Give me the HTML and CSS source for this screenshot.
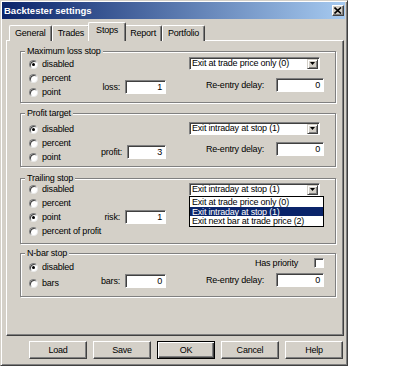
FILE: index.html
```html
<!DOCTYPE html>
<html>
<head>
<meta charset="utf-8">
<link rel="stylesheet" href="styles.css">
</head>
<body>
<div class="dialog">
  <div class="titlebar">
    <span class="title">Backtester settings</span>
    <span class="close"><svg width="8" height="7" viewBox="0 0 8 7"><path d="M0.5 0.5 L7 6.5 M7 0.5 L0.5 6.5" stroke="#000" stroke-width="1.6"/></svg></span>
  </div>
  <div class="tabs">
    <span class="tab">General</span>
    <span class="tab">Trades</span>
    <span class="tab active">Stops</span>
    <span class="tab">Report</span>
    <span class="tab">Portfolio</span>
  </div>
  <div class="panel">
    <div class="group g1">
      <span class="legend">Maximum loss stop</span>
      <div class="col-radio">
        <div class="radio-row"><span class="radio checked"></span>disabled</div>
        <div class="radio-row"><span class="radio"></span>percent</div>
        <div class="radio-row"><span class="radio"></span>point</div>
      </div>
      <div class="col-param">
        <span class="lbl">loss:</span><span class="input">1</span>
      </div>
      <div class="col-right">
        <div class="combo"><span class="combo-text">Exit at trade price only (0)</span><span class="combo-btn"><svg width="5" height="3" viewBox="0 0 5 3"><path d="M0 0 H5 L2.5 3 Z" fill="#000"/></svg></span></div>
        <div class="reentry"><span class="lbl">Re-entry delay:</span><span class="input wide">0</span></div>
      </div>
    </div>

    <div class="group g2">
      <span class="legend">Profit target</span>
      <div class="col-radio">
        <div class="radio-row"><span class="radio checked"></span>disabled</div>
        <div class="radio-row"><span class="radio"></span>percent</div>
        <div class="radio-row"><span class="radio"></span>point</div>
      </div>
      <div class="col-param">
        <span class="lbl">profit:</span><span class="input">3</span>
      </div>
      <div class="col-right">
        <div class="combo"><span class="combo-text">Exit intraday at stop (1)</span><span class="combo-btn"><svg width="5" height="3" viewBox="0 0 5 3"><path d="M0 0 H5 L2.5 3 Z" fill="#000"/></svg></span></div>
        <div class="reentry"><span class="lbl">Re-entry delay:</span><span class="input wide">0</span></div>
      </div>
    </div>

    <div class="group g3">
      <span class="legend">Trailing stop</span>
      <div class="col-radio">
        <div class="radio-row"><span class="radio"></span>disabled</div>
        <div class="radio-row"><span class="radio"></span>percent</div>
        <div class="radio-row"><span class="radio checked"></span>point</div>
        <div class="radio-row"><span class="radio"></span>percent of profit</div>
      </div>
      <div class="col-param">
        <span class="lbl">risk:</span><span class="input">1</span>
      </div>
      <div class="col-right">
        <div class="combo open"><span class="combo-text">Exit intraday at stop (1)</span><span class="combo-btn"><svg width="5" height="3" viewBox="0 0 5 3"><path d="M0 0 H5 L2.5 3 Z" fill="#000"/></svg></span>
          <div class="dropdown-list">
            <div class="opt">Exit at trade price only (0)</div>
            <div class="opt sel">Exit intraday at stop (1)</div>
            <div class="opt">Exit next bar at trade price (2)</div>
          </div>
        </div>
      </div>
    </div>

    <div class="group g4">
      <span class="legend">N-bar stop</span>
      <div class="col-radio">
        <div class="radio-row"><span class="radio checked"></span>disabled</div>
        <div class="radio-row"><span class="radio"></span>bars</div>
      </div>
      <div class="col-param">
        <span class="lbl">bars:</span><span class="input">0</span>
      </div>
      <div class="col-right">
        <div class="priority"><span class="lbl">Has priority</span><span class="checkbox"></span></div>
        <div class="reentry"><span class="lbl">Re-entry delay:</span><span class="input wide">0</span></div>
      </div>
    </div>
  </div>
  <div class="buttons">
    <span class="btn">Load</span>
    <span class="btn">Save</span>
    <span class="btn default">OK</span>
    <span class="btn">Cancel</span>
    <span class="btn">Help</span>
  </div>
</div>
</body>
</html>
```

FILE: styles.css
```css
* { box-sizing: border-box; }
body {
  margin: 0;
  background: #fff;
  font-family: "Liberation Sans", Arial, sans-serif;
  font-size: 9px;
  letter-spacing: -0.2px;
  color: #000;
}
.dialog {
  width: 348px;
  height: 366px;
  background: #d4d0c8;
  border: 1px solid;
  border-color: #d4d0c8 #404040 #404040 #d4d0c8;
  box-shadow: inset 1px 1px #fff, inset -1px -1px #808080;
  padding: 1px 2px 2px 1px;
  display: flex;
  flex-direction: column;
}
.titlebar {
  height: 17px;
  background: linear-gradient(to right, #0a246a, #a6caf0);
  display: flex;
  align-items: center;
  justify-content: space-between;
  padding: 0 1px 0 2px;
}
.title {
  color: #fff;
  font-weight: bold;
  font-size: 9.5px;
  letter-spacing: 0;
}
.close {
  width: 12px;
  height: 11px;
  background: #d4d0c8;
  border: 1px solid;
  border-color: #fff #404040 #404040 #fff;
  box-shadow: inset -1px -1px #808080;
  display: flex;
  align-items: center;
  justify-content: center;
}
.tabs {
  display: flex;
  align-items: flex-end;
  height: 20px;
  padding-left: 7px;
  margin-top: 2px;
  margin-bottom: -1px;
  position: relative;
  z-index: 1;
}
.tab {
  height: 16px;
  line-height: 14px;
  padding: 0 5px;
  border: 1px solid;
  border-bottom: 0;
  border-color: #fff #404040 #fff #fff;
  box-shadow: inset -1px 0 #808080;
  border-radius: 2px 2px 0 0;
  background: #d4d0c8;
}
.tab.active {
  height: 19px;
  line-height: 15px;
  margin: 0 -2px;
  padding: 0 7px;
  position: relative;
}
.panel {
  height: 296px;
  margin: 0 1px 0 4px;
  border: 1px solid;
  border-color: #fff #404040 #404040 #fff;
  box-shadow: inset -1px -1px #808080;
  padding-top: 10px;
  display: flex;
  flex-direction: column;
}
.group {
  position: relative;
  display: flex;
  border: 1px solid #808080;
  box-shadow: inset 1px 1px #fff, 1px 1px #fff;
  margin: 0 7px 0 13px;
}
.g1 { height: 52px; }
.g2 { height: 54px; margin-top: 10px; }
.g3 { height: 66px; margin-top: 11px; }
.g4 { height: 44px; margin-top: 9px; }
.legend {
  position: absolute;
  top: -6px;
  left: 4px;
  padding: 0 2px;
  line-height: 11px;
  background: #d4d0c8;
}
.col-radio {
  width: 80px;
  display: flex;
  flex-direction: column;
}
.radio-row {
  height: 14px;
  display: flex;
  align-items: center;
  gap: 4px;
  padding-left: 8px;
  white-space: nowrap;
}
.radio {
  width: 9px;
  height: 9px;
  border-radius: 50%;
  background: #fff;
  border: 1px solid;
  border-color: #808080 #e8e8e8 #e8e8e8 #808080;
  box-shadow: inset 1px 1px #404040;
  position: relative;
  flex: none;
}
.radio.checked::after {
  content: "";
  position: absolute;
  left: 2px;
  top: 2px;
  width: 3px;
  height: 3px;
  border-radius: 50%;
  background: #000;
}
.col-param {
  width: 68px;
  display: flex;
  align-items: center;
  justify-content: flex-end;
  align-self: flex-start;
  gap: 5px;
  padding-right: 3px;
}
.input {
  width: 41px;
  height: 14px;
  background: #fff;
  border: 1px solid;
  border-color: #808080 #fff #fff #808080;
  box-shadow: inset 1px 1px #404040;
  text-align: right;
  padding-right: 3px;
  line-height: 12px;
}
.input.wide { width: 48px; }
.col-right {
  flex: 1;
  display: flex;
  flex-direction: column;
  padding-left: 20px;
}
.combo {
  position: relative;
  width: 131px;
  height: 13px;
  background: #fff;
  border: 1px solid;
  border-color: #808080 #fff #fff #808080;
  box-shadow: inset 1px 1px #404040;
  display: flex;
  align-items: center;
  padding-left: 2px;
}
.combo-text { flex: 1; line-height: 11px; }
.combo-btn {
  width: 11px;
  height: 10px;
  margin-right: 1px;
  background: #d4d0c8;
  border: 1px solid;
  border-color: #d4d0c8 #404040 #404040 #d4d0c8;
  box-shadow: inset 1px 1px #fff, inset -1px -1px #808080;
  display: flex;
  align-items: center;
  justify-content: center;
}
.dropdown-list {
  position: absolute;
  top: 12px;
  left: -1px;
  width: 135px;
  background: #fff;
  border: 1px solid #000;
  padding: 0;
  z-index: 2;
}
.opt {
  height: 9.7px;
  line-height: 10px;
  padding-left: 2px;
}
.opt.sel { background: #0a246a; color: #fff; }
.reentry {
  display: flex;
  align-items: center;
  justify-content: flex-end;
  gap: 12px;
  padding-right: 11px;
}
.priority {
  display: flex;
  align-items: center;
  justify-content: flex-end;
  gap: 16px;
  padding-right: 11px;
  height: 11px;
}
.checkbox {
  width: 10px;
  height: 10px;
  background: #fff;
  border: 1px solid;
  border-color: #808080 #fff #fff #808080;
  box-shadow: inset 1px 1px #404040;
}

.g1 .col-radio { padding-top: 5px; }
.g1 .col-param { margin-top: 28px; }
.g1 .col-right { padding-top: 5px; }
.g1 .reentry { margin-top: 8px; }

.g2 .col-radio { padding-top: 8px; }
.g2 .col-param { margin-top: 31px; }
.g2 .col-right { padding-top: 8px; }
.g2 .reentry { margin-top: 7px; }

.g3 .col-radio { padding-top: 3px; }
.g3 .col-param { margin-top: 31px; }
.g3 .col-right { padding-top: 4px; }

.g4 .col-radio { padding-top: 6px; }
.g4 .radio-row + .radio-row { margin-top: 2px; }
.g4 .col-param { margin-top: 20px; }
.g4 .col-right { padding-top: 3px; }
.g4 .reentry { margin-top: 5px; }

.buttons {
  display: flex;
  gap: 6px;
  padding: 5px 0 0 27px;
}
.btn {
  width: 58px;
  height: 18px;
  line-height: 16px;
  text-align: center;
  background: #d4d0c8;
  border: 1px solid;
  border-color: #fff #404040 #404040 #fff;
  box-shadow: inset -1px -1px #808080;
}
.btn.default {
  border-color: #000;
  box-shadow: inset 1px 1px #fff, inset -1px -1px #404040, inset -2px -2px #808080;
}
```
